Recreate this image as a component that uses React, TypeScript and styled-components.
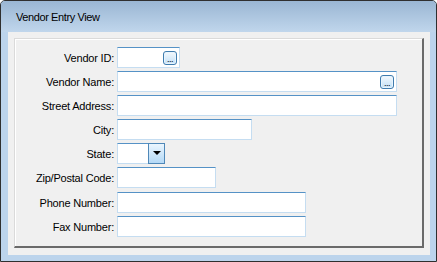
import React from 'react';
import styled, { createGlobalStyle } from 'styled-components';

const GlobalStyle = createGlobalStyle`
  html, body {
    margin: 0;
    padding: 0;
    background: #ffffff;
  }
  body {
    font-family: 'Liberation Sans', Arial, sans-serif;
  }
`;

const Window = styled.div`
  box-sizing: border-box;
  width: 437px;
  height: 262px;
  display: flex;
  flex-direction: column;
  border: 1px solid #2f2f2f;
  border-radius: 5px 5px 0 0;
  background: #bcd4ec;
  overflow: hidden;
`;

const TitleBar = styled.div`
  height: 31px;
  flex-shrink: 0;
  display: flex;
  align-items: center;
  padding-left: 15px;
  padding-top: 1px;
  box-sizing: border-box;
  background: linear-gradient(#9ab6d3, #c0d6ec);
  font-size: 11px;
  letter-spacing: -0.4px;
  color: #000;
`;

const Frame = styled.div`
  flex: 1;
  display: flex;
  padding: 0 6px 6px 7px;
`;

const Client = styled.div`
  flex: 1;
  display: flex;
  background: #f0f0f0;
  padding: 6px 6px 7px 6px;
`;

const GroupPanel = styled.div`
  flex: 1;
  box-sizing: border-box;
  border-top: 1px solid #dadada;
  border-left: 1px solid #dadada;
  border-right: 2px solid #6a6a6a;
  border-bottom: 2px solid #6a6a6a;
  box-shadow: inset 1px 1px 0 #ffffff;
  padding-top: 8px;
`;

const FormGrid = styled.div`
  display: grid;
  grid-template-columns: 99px 1fr;
  grid-auto-rows: 21px;
  column-gap: 3px;
  row-gap: 3.1px;
  align-items: center;
`;

const FieldLabel = styled.label`
  text-align: right;
  font-size: 11px;
  letter-spacing: -0.2px;
  color: #000;
  line-height: 21px;
  padding-top: 1px;
  height: 21px;
  box-sizing: border-box;
`;

const TextBox = styled.div<{ $width: number }>`
  box-sizing: border-box;
  width: ${(p) => p.$width}px;
  height: 21px;
  display: flex;
  align-items: center;
  justify-content: flex-end;
  background: #ffffff;
  border: 1px solid #c5ddf1;
  border-top-color: #5592c6;
  padding-right: 2px;
`;

const EllipsisButton = styled.div`
  box-sizing: border-box;
  width: 14px;
  height: 14px;
  border: 1px solid #3f7cae;
  border-radius: 3px;
  background: linear-gradient(#f4f9fd, #c2e0f7);
  box-shadow: inset 0 0 0 1px #e8f4fd;
  display: flex;
  align-items: flex-end;
  justify-content: center;
  font-size: 9px;
  line-height: 9px;
  letter-spacing: -0.5px;
  color: #000;
  overflow: hidden;
`;

const ComboBox = styled.div<{ $width: number }>`
  box-sizing: border-box;
  width: ${(p) => p.$width}px;
  height: 21px;
  display: flex;
  background: #ffffff;
  border: 1px solid #c5ddf1;
  border-top-color: #5592c6;
`;

const ComboText = styled.div`
  flex: 1;
`;

const DropButton = styled.div`
  box-sizing: border-box;
  width: 17px;
  margin: -1px -1px -1px 0;
  border: 1px solid #4f88b8;
  background: linear-gradient(#eaf5fe, #b4d9f6);
  display: flex;
  justify-content: center;
  padding-top: 7px;
`;

const Arrow = styled.div`
  width: 0;
  height: 0;
  border-left: 4px solid transparent;
  border-right: 4px solid transparent;
  border-top: 4px solid #000;
`;

const fields: { label: string; width: number; kind?: 'lookup' | 'combo' }[] = [
  { label: 'Vendor ID:', width: 63, kind: 'lookup' },
  { label: 'Vendor Name:', width: 280, kind: 'lookup' },
  { label: 'Street Address:', width: 280 },
  { label: 'City:', width: 135 },
  { label: 'State:', width: 48, kind: 'combo' },
  { label: 'Zip/Postal Code:', width: 99 },
  { label: 'Phone Number:', width: 189 },
  { label: 'Fax Number:', width: 189 },
];

export default function App() {
  return (
    <>
      <GlobalStyle />
      <Window>
        <TitleBar>Vendor Entry View</TitleBar>
        <Frame>
          <Client>
            <GroupPanel>
              <FormGrid>
                {fields.map((f) => (
                  <React.Fragment key={f.label}>
                    <FieldLabel>{f.label}</FieldLabel>
                    {f.kind === 'combo' ? (
                      <ComboBox $width={f.width}>
                        <ComboText />
                        <DropButton>
                          <Arrow />
                        </DropButton>
                      </ComboBox>
                    ) : (
                      <TextBox $width={f.width}>
                        {f.kind === 'lookup' && <EllipsisButton>...</EllipsisButton>}
                      </TextBox>
                    )}
                  </React.Fragment>
                ))}
              </FormGrid>
            </GroupPanel>
          </Client>
        </Frame>
      </Window>
    </>
  );
}
